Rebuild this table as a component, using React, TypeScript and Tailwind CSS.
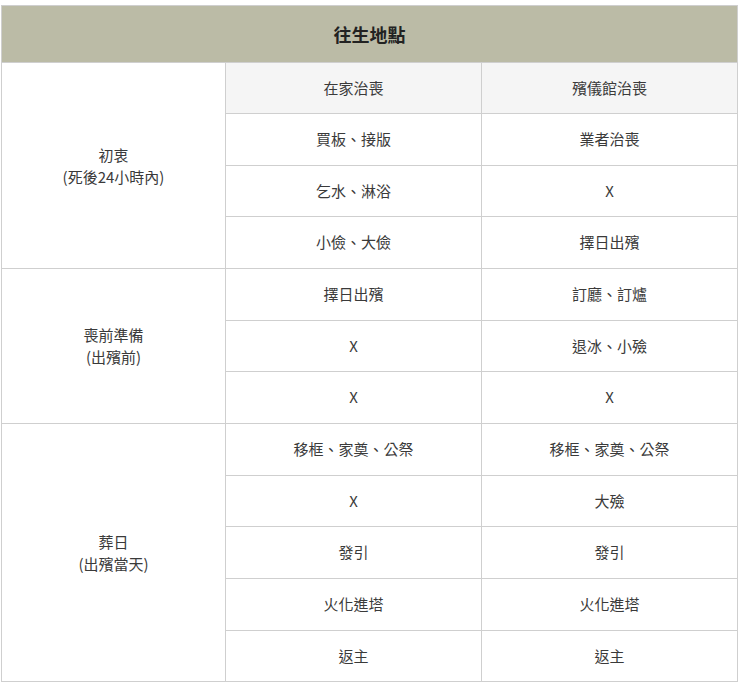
const groups = [
  {
    title: "初衷",
    sub: "(死後24小時內)",
    rows: [
      ["買板、接版", "業者治喪"],
      ["乞水、淋浴", "X"],
      ["小儉、大儉", "擇日出殯"],
    ],
    heights: ["h-[52px]", "h-[51px]", "h-[52px]"],
    withHead: true,
  },
  {
    title: "喪前準備",
    sub: "(出殯前)",
    rows: [
      ["擇日出殯", "訂廳、訂爐"],
      ["X", "退冰、小殮"],
      ["X", "X"],
    ],
    heights: ["h-[52px]", "h-[51px]", "h-[52px]"],
  },
  {
    title: "葬日",
    sub: "(出殯當天)",
    rows: [
      ["移框、家奠、公祭", "移框、家奠、公祭"],
      ["X", "大殮"],
      ["發引", "發引"],
      ["火化進塔", "火化進塔"],
      ["返主", "返主"],
    ],
    heights: ["h-[52px]", "h-[51px]", "h-[52px]", "h-[52px]", "h-[51px]"],
  },
];

const cell = "border border-[#cfcfcf] text-center align-middle";

export default function App() {
  return (
    <div className="min-h-screen bg-white pt-[5px] pl-[1px] font-['Noto_Sans_CJK_TC','Noto_Sans',sans-serif] text-[15px] text-[#3a3a3a]">
      <table className="w-[736px] table-fixed border-collapse">
        <colgroup>
          <col className="w-[224px]" />
          <col className="w-[256px]" />
          <col className="w-[256px]" />
        </colgroup>
        <thead>
          <tr className="h-[57px]">
            <th colSpan={3} className="border border-[#cfcfcf] bg-[#bbbba6] text-center text-[18px] font-bold text-[#222]">
              往生地點
            </th>
          </tr>
        </thead>
        <tbody>
          {groups.map((g) => {
            const span = g.rows.length + (g.withHead ? 1 : 0);
            const first = (
              <td rowSpan={span} className={`${cell} bg-white leading-[22px]`}>
                {g.title}
                <br />
                {g.sub}
              </td>
            );
            return [
              g.withHead && (
                <tr key={g.title + "-h"} className="h-[51px]">
                  {first}
                  <td className={`${cell} bg-[#f5f5f5]`}>在家治喪</td>
                  <td className={`${cell} bg-[#f5f5f5]`}>殯儀館治喪</td>
                </tr>
              ),
              ...g.rows.map((r, i) => (
                <tr key={g.title + i} className={g.heights[i]}>
                  {!g.withHead && i === 0 && first}
                  <td className={cell}>{r[0]}</td>
                  <td className={cell}>{r[1]}</td>
                </tr>
              )),
            ];
          })}
        </tbody>
      </table>
    </div>
  );
}
